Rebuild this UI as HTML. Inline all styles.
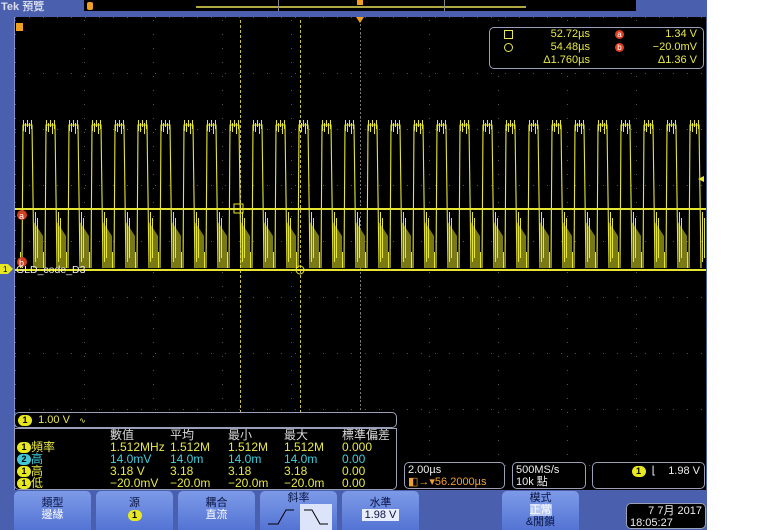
<!DOCTYPE html>
<html><head><meta charset="utf-8"><style>
*{margin:0;padding:0;box-sizing:border-box}
body{width:767px;height:530px;background:#fff;position:relative;overflow:hidden;font-family:"Liberation Sans","Noto Sans CJK TC",sans-serif}
.abs{position:absolute}
#frame{left:0;top:0;width:707px;height:530px;background:#4a5fae}
#scr{left:14px;top:17px;width:692px;height:473px;background:#000;border-left:1px solid #8090d0}
.box{position:absolute;background:#000;border:1px solid #9aa0b8;border-radius:5px;color:#e8e84a;font-size:11px}
.btn{position:absolute;top:491px;height:39px;width:77px;border-radius:5px 5px 0 0;background:linear-gradient(#7d9ae8,#5474d4);color:#0a1440;font-size:11px;text-align:center;line-height:12px;padding-top:6px}
.c1{display:inline-block;width:14px;height:11px;border-radius:6px;background:#e8e820;color:#000;font-size:9px;line-height:11px;text-align:center;font-weight:bold;vertical-align:middle}
.c2{background:#40c8d8}
.y{color:#e8e84a}.cy{color:#40d0e0}
</style></head><body>
<div id="frame" class="abs"></div>
<div class="abs" style="left:1px;top:-2px;color:#fff;font-size:11px;"><b style="color:#dde">Tek</b> 預覽</div>
<div class="abs" style="left:84px;top:0;width:552px;height:11px;background:#000"></div>
<div class="abs" style="left:87px;top:2px;width:6px;height:8px;background:#f0a020;border-radius:2px"></div>
<div class="abs" style="left:196px;top:6px;width:330px;height:2px;background:#b0a840"></div>
<div class="abs" style="left:278px;top:0;width:1px;height:11px;background:#888"></div>
<div class="abs" style="left:444px;top:0;width:1px;height:11px;background:#888"></div>
<div class="abs" style="left:357px;top:0;width:6px;height:5px;background:#f0a020"></div>
<div id="scr" class="abs"></div>
<svg class="abs" style="left:0;top:0" width="707" height="490" id="sv"></svg>
<div class="box" style="left:489px;top:27px;width:215px;height:42px;line-height:13px;padding-top:1px">
<div style="position:absolute;left:14px;top:2px;width:9px;height:9px;border:1px solid #e8e84a"></div>
<div style="position:absolute;left:14px;top:15px;width:9px;height:9px;border:1px solid #e8e84a;border-radius:5px"></div>
<div style="position:absolute;right:113px;top:0;text-align:right">52.72µs<br>54.48µs<br>Δ1.760µs</div>
<div style="position:absolute;left:125px;top:2px;width:9px;height:9px;border-radius:5px;background:#e04020;color:#fff;font-size:8px;line-height:9px;text-align:center">a</div>
<div style="position:absolute;left:125px;top:15px;width:9px;height:9px;border-radius:5px;background:#e04020;color:#fff;font-size:8px;line-height:9px;text-align:center">b</div>
<div style="position:absolute;right:6px;top:0;text-align:right">1.34 V<br>−20.0mV<br>Δ1.36 V</div>
</div>
<div class="box" style="left:14px;top:412px;width:383px;height:16px;line-height:14px;padding-left:3px"><span class="c1">1</span> &nbsp;1.00 V &nbsp; <span style="font-size:8px">∿</span></div>
<div class="box" style="left:14px;top:428px;width:383px;height:62px;border-radius:0 0 5px 5px;line-height:12px;font-size:12px">
<div style="position:absolute;top:0;left:95px;color:#ddd">數值</div><div style="position:absolute;top:0;left:155px;color:#ddd">平均</div><div style="position:absolute;top:0;left:213px;color:#ddd">最小</div><div style="position:absolute;top:0;left:269px;color:#ddd">最大</div><div style="position:absolute;top:0;left:327px;color:#ddd">標準偏差</div>
<div style="position:absolute;top:12px;left:2px;white-space:pre"><span class="c1">1</span><span class="y">頻率</span></div>
<div style="position:absolute;top:24px;left:2px"><span class="c1 c2">2</span><span class="cy">高</span></div>
<div style="position:absolute;top:36px;left:2px"><span class="c1">1</span><span class="y">高</span></div>
<div style="position:absolute;top:48px;left:2px"><span class="c1">1</span><span class="y">低</span></div>
<div class="y" style="position:absolute;top:12px;left:95px">1.512MHz</div><div class="y" style="position:absolute;top:12px;left:155px">1.512M</div><div class="y" style="position:absolute;top:12px;left:213px">1.512M</div><div class="y" style="position:absolute;top:12px;left:269px">1.512M</div><div class="y" style="position:absolute;top:12px;left:327px">0.000</div>
<div class="cy" style="position:absolute;top:24px;left:95px">14.0mV</div><div class="cy" style="position:absolute;top:24px;left:155px">14.0m</div><div class="cy" style="position:absolute;top:24px;left:213px">14.0m</div><div class="cy" style="position:absolute;top:24px;left:269px">14.0m</div><div class="cy" style="position:absolute;top:24px;left:327px">0.00</div>
<div class="y" style="position:absolute;top:36px;left:95px">3.18 V</div><div class="y" style="position:absolute;top:36px;left:155px">3.18</div><div class="y" style="position:absolute;top:36px;left:213px">3.18</div><div class="y" style="position:absolute;top:36px;left:269px">3.18</div><div class="y" style="position:absolute;top:36px;left:327px">0.00</div>
<div class="y" style="position:absolute;top:48px;left:95px">−20.0mV</div><div class="y" style="position:absolute;top:48px;left:155px">−20.0m</div><div class="y" style="position:absolute;top:48px;left:213px">−20.0m</div><div class="y" style="position:absolute;top:48px;left:269px">−20.0m</div><div class="y" style="position:absolute;top:48px;left:327px">0.00</div>
</div>
<div class="box" style="left:404px;top:462px;width:101px;height:27px;color:#eee;line-height:12px;padding:1px 3px">2.00µs<br><span style="color:#f0a030">◧→▾56.2000µs</span></div>
<div class="box" style="left:512px;top:462px;width:74px;height:27px;color:#eee;line-height:12px;padding:1px 3px">500MS/s<br>10k 點</div>
<div class="box" style="left:592px;top:462px;width:113px;height:27px;color:#eee;line-height:12px;padding:2px 4px;text-align:right"><span class="c1">1</span> &nbsp;⌊ &nbsp;&nbsp; 1.98 V</div>
<div class="btn" style="left:14px">類型<br><span style="color:#fff">邊緣</span></div>
<div class="btn" style="left:96px">源<br><span class="c1">1</span></div>
<div class="btn" style="left:178px">耦合<br><span style="color:#fff">直流</span></div>
<div class="btn" style="left:260px;padding-top:1px">斜率
<svg width="77" height="26" style="position:absolute;left:0;top:13px"><rect x="40" y="0" width="32" height="26" fill="#dce4fa"/><path d="M8 20 H18 L26 6 H34" stroke="#000" fill="none"/><path d="M44 6 H52 L60 20 H68" stroke="#000" fill="none"/></svg></div>
<div class="btn" style="left:342px">水準<br><span style="background:#e8eefc;padding:0 3px">1.98 V</span></div>
<div class="btn" style="left:502px;padding-top:1px">模式<br><span style="color:#fff;background:#b8c8f4">正常</span><br>&amp;閒鎖</div>
<div class="box" style="left:626px;top:503px;width:80px;height:26px;color:#eee;line-height:12px;padding:1px 3px;text-align:right;background:#000">7 7月 2017<br><span style="float:left">18:05:27</span></div>
<script>
var s='',Y='#e6e632';
for(var i=0;i<=10;i++){var x=15+i*69.1;for(var y=20;y<460;y+=14)s+='<rect x="'+(x|0)+'" y="'+y+'" width="1" height="1" fill="#555"/>';}
for(var j=0;j<=8;j++){var yy=17+j*56;for(var x=15;x<706;x+=14)s+='<rect x="'+x+'" y="'+(yy|0)+'" width="1" height="1" fill="#555"/>';}
for(var y=20;y<460;y+=4)s+='<rect x="360" y="'+y+'" width="1" height="2" fill="#777"/>';
for(var y=20;y<460;y+=5){s+='<rect x="240" y="'+y+'" width="1" height="3" fill="#c8c040"/><rect x="300" y="'+y+'" width="1" height="3" fill="#c8c040"/>';}
s+='<path d="M356 17 L364 17 L360 23Z" fill="#f0a020"/>';
s+='<rect x="16" y="23" width="7" height="8" fill="#f0a020"/>';
for(var n=0;n<30;n++){var x0=22+23*n;
 s+='<path d="M'+x0+' 268 L'+(x0+1)+' 125 L'+(x0+10)+' 125 L'+(x0+12)+' 268" stroke="'+Y+'" fill="none" stroke-width="1.1"/>';
 for(var k=0;k<5;k++)s+='<rect x="'+(x0+1+k*2)+'" y="'+(120+(k%2)*3)+'" width="1" height="'+(11-(k%3)*2)+'" fill="'+Y+'"/>';
 if(x0+22<706)s+='<path d="M'+(x0+12)+' 222 L'+(x0+21)+' 236 L'+(x0+21)+' 268 L'+(x0+12)+' 268Z" fill="#7a7a14"/>';
 var xs=[x0+13,x0+15];for(var k=0;k<2;k++){if(xs[k]<705)s+='<rect x="'+xs[k]+'" y="'+(212+k*6)+'" width="1" height="'+(50-k*10)+'" fill="'+Y+'"/>';}
 s+='<rect x="'+(x0-2)+'" y="252" width="1" height="16" fill="'+Y+'"/>';
}
s+='<rect x="15" y="208" width="691" height="2" fill="'+Y+'"/><rect x="15" y="269" width="691" height="2" fill="'+Y+'"/>';
s+='<rect x="234" y="204" width="9" height="9" fill="none" stroke="'+Y+'"/><circle cx="300" cy="270" r="4" fill="none" stroke="'+Y+'"/>';
s+='<circle cx="22" cy="215" r="5" fill="#d04020"/><text x="19" y="219" font-size="9" fill="#fff">a</text>';
s+='<circle cx="22" cy="262" r="5" fill="#d04020"/><text x="19" y="266" font-size="9" fill="#fff">b</text>';
s+='<path d="M0 264 H8 L13 269 L8 274 H0Z" fill="#e8e820"/><text x="3" y="272" font-size="8" fill="#000">1</text>';
s+='<text x="16" y="273" font-size="10.5" fill="#eee" font-family="Liberation Sans">GLD_code_D3</text>';
s+='<path d="M698 179 L704 176 L704 182Z" fill="'+Y+'"/>';
document.getElementById('sv').innerHTML=s;
</script>
</body></html>
